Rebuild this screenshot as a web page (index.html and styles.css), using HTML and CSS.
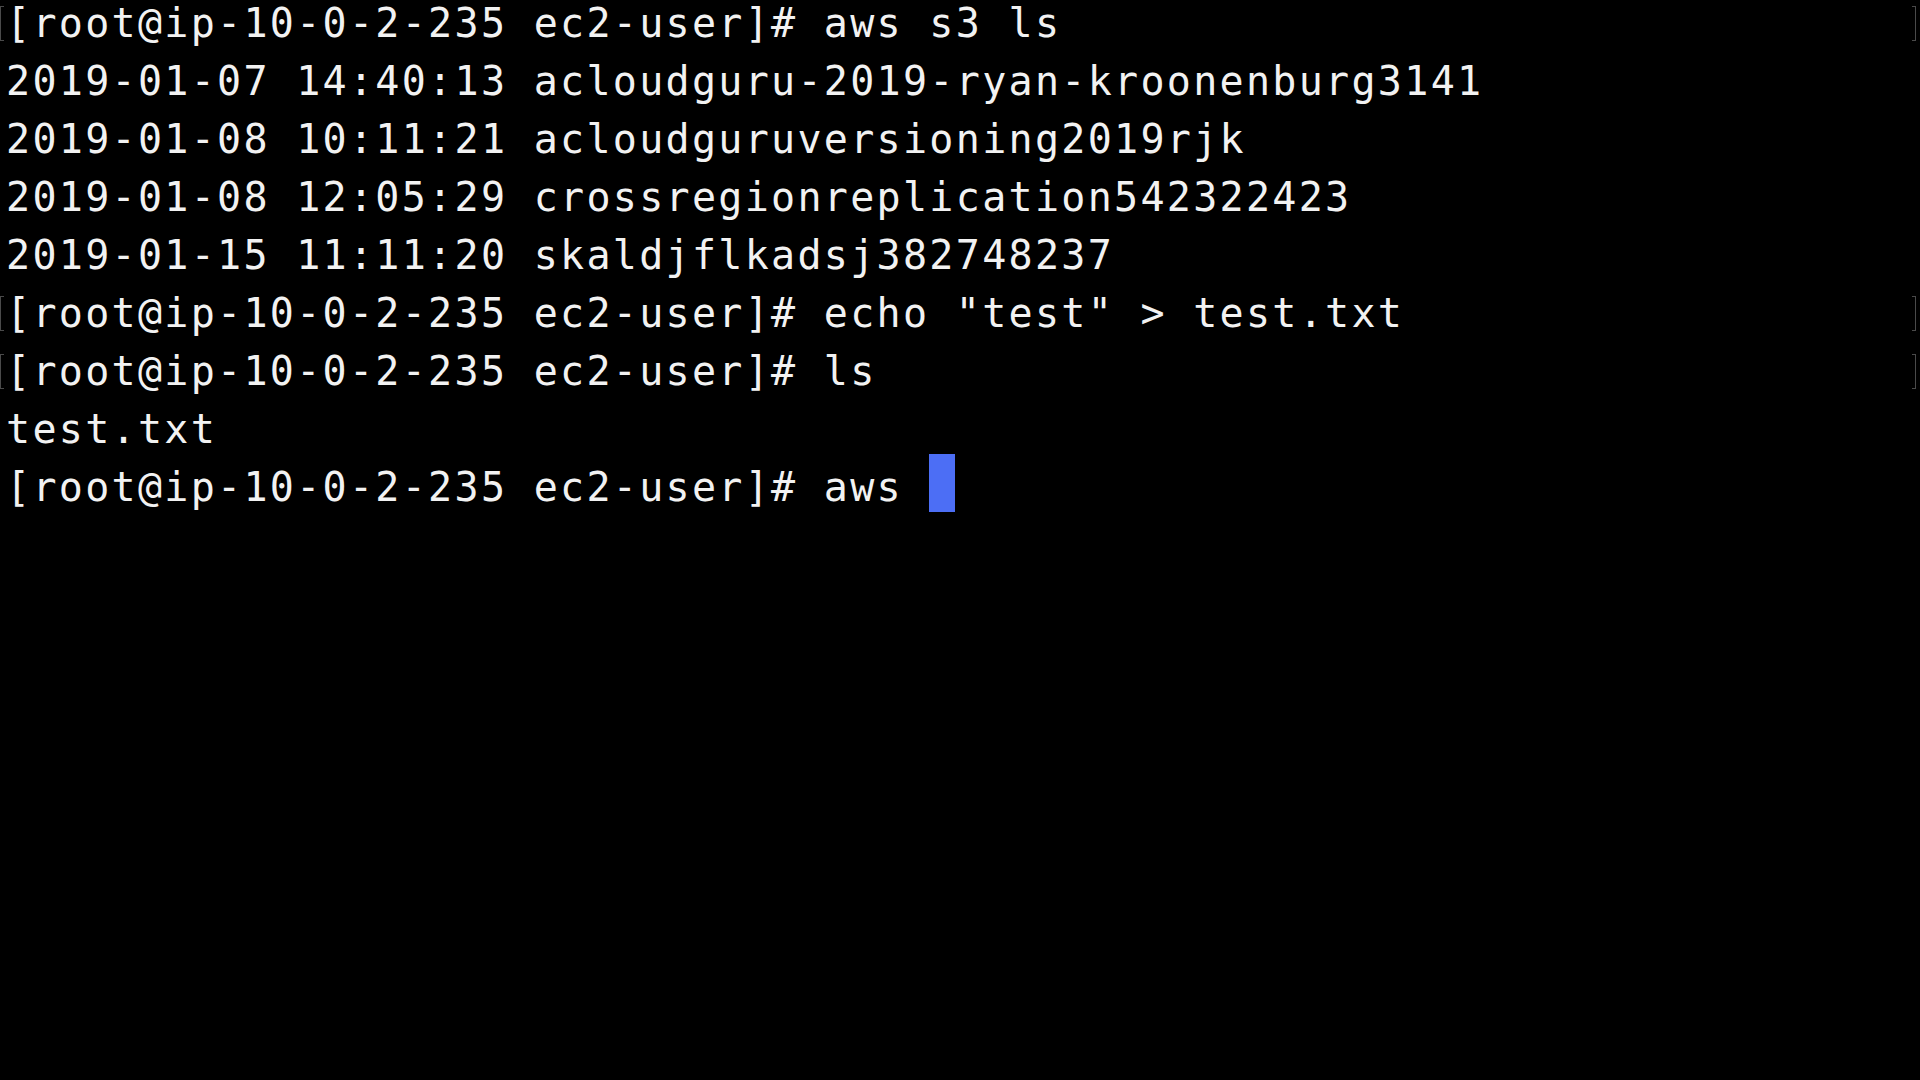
FILE: index.html
```html
<!DOCTYPE html>
<html lang="en">
<head>
    <meta charset="UTF-8">
    <meta name="viewport" content="width=device-width, initial-scale=1.0">
    <title>Terminal</title>
    <link rel="stylesheet" href="styles.css">
</head>
<body>
    <div class="terminal">
        <div class="line ghost">[root@ip-10-0-2-235 ec2-user]# aws s3 ls</div>
        <div class="line">2019-01-07 14:40:13 acloudguru-2019-ryan-kroonenburg3141</div>
        <div class="line">2019-01-08 10:11:21 acloudguruversioning2019rjk</div>
        <div class="line">2019-01-08 12:05:29 crossregionreplication542322423</div>
        <div class="line">2019-01-15 11:11:20 skaldjflkadsj382748237</div>
        <div class="line ghost">[root@ip-10-0-2-235 ec2-user]# echo "test" &gt; test.txt</div>
        <div class="line ghost">[root@ip-10-0-2-235 ec2-user]# ls</div>
        <div class="line">test.txt</div>
        <div class="line">[root@ip-10-0-2-235 ec2-user]# aws <span class="cursor"></span></div>
    </div>
</body>
</html>
```

FILE: styles.css
```css
* {
    margin: 0;
    padding: 0;
    box-sizing: border-box;
}
html, body {
    background-color: #000000;
    height: 100%;
    overflow: hidden;
}
body {
    font-family: "DejaVu Sans Mono", monospace;
}

.terminal {
    margin-top: -6px;
    padding-left: 6px;
    color: #f2f2f2;
    font-size: 40px;
    line-height: 58px;
    letter-spacing: 2.3px;
}

.line {
    position: relative;
    height: 58px;
    white-space: pre;
}

/* faint leftover brackets at the screen edges */
.ghost::before,
.ghost::after {
    content: "";
    position: absolute;
    top: 12px;
    width: 3px;
    height: 33px;
    border: 1px solid #4a4a4a;
}
.ghost::before {
    left: -6px;
    border-right: none;
}
.ghost::after {
    left: 1906px;
    border-left: none;
}

.cursor {
    display: inline-block;
    width: 26px;
    height: 58px;
    vertical-align: top;
    position: relative;
    top: -4px;
    background-color: #4c6ef5;
}
```
